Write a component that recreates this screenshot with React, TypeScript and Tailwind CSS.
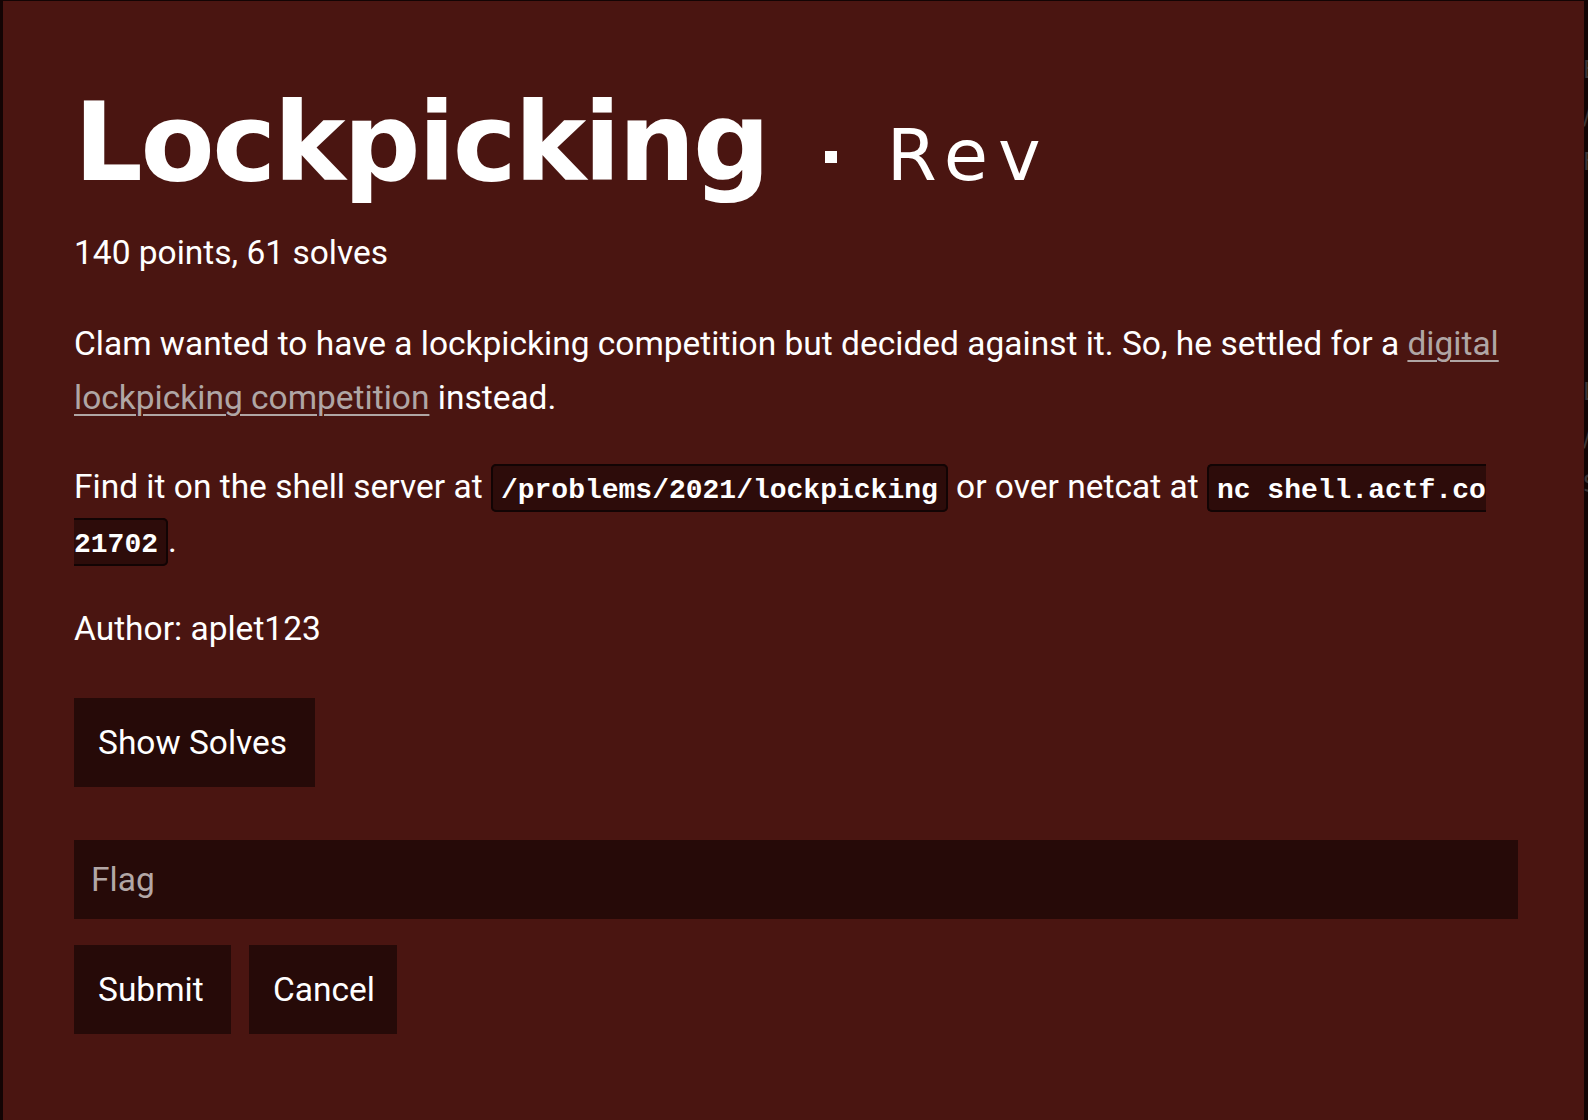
import React from "react";

const body = "font-['Roboto',sans-serif] text-[33.5px] leading-[54px] text-white";
const code =
  "font-['Liberation_Mono',monospace] text-[28px] leading-[30px] font-bold text-white bg-[#2d0c0a] border-2 border-[#120404] rounded-[5px] px-[8px] pt-[9px] pb-[4px]";
const btn =
  "h-[89px] bg-[#260a08] text-white px-6 flex items-center font-['Roboto',sans-serif] text-[33.5px] leading-[54px]";

export default function App() {
  return (
    <div className="w-[1588px] h-[1120px] overflow-hidden bg-[#130404] flex pl-[3px] pt-px">
      <div className="w-[1581px] h-full bg-[#4a1511] pl-[71px] pt-[77px]">
        <div className="w-[1444px]">
          <h1 className="flex items-baseline leading-[130px] text-white font-['DejaVu_Sans',sans-serif]">
            <span className="text-[108px] font-bold tracking-[-2.4px]">Lockpicking</span>
            <span className="self-start w-3 h-3 bg-white ml-[57px] mr-[50px] mt-[73px]" />
            <span className="text-[72px] font-normal tracking-[10px]">Rev</span>
          </h1>

          <p className={`${body} mt-[6px]`}>140 points, 61 solves</p>

          <p className={`${body} mt-[37px]`}>
            Clam wanted to have a lockpicking competition but decided against it. So, he settled for a{" "}
            <a href="#" className="text-[#b0a6a5] underline underline-offset-[5px] decoration-2">
              digital lockpicking competition
            </a>{" "}
            instead.
          </p>

          <p className={`${body} mt-[35px]`}>
            Find it on the shell server at <code className={code}>/problems/2021/lockpicking</code> or over
            netcat at <code className={code}>nc shell.actf.co 21702</code>.
          </p>

          <p className={`${body} mt-[34px]`}>Author: aplet123</p>

          <button className={`${btn} w-[241px] mt-[42px]`}>Show Solves</button>

          <div className="mt-[53px] h-[79px] bg-[#260a08] flex items-center px-[17px]">
            <span className="font-['Roboto',sans-serif] text-[33.5px] leading-[54px] text-[#b3a7a6]">Flag</span>
          </div>

          <div className="mt-[26px] flex gap-[18px]">
            <button className={`${btn} w-[157px]`}>Submit</button>
            <button className={`${btn} w-[148px]`}>Cancel</button>
          </div>
        </div>
      </div>
      <div className="flex-1 overflow-hidden">
        <div className="flex flex-col pt-[46px] text-[#3c3434] font-['DejaVu_Sans',sans-serif] text-[24px] leading-[46px] -ml-[1px]">
          <span>E</span>
          <span>/</span>
          <span>F</span>
          <span className="mt-[184px]">L</span>
          <span>/</span>
          <span>S</span>
        </div>
      </div>
    </div>
  );
}
